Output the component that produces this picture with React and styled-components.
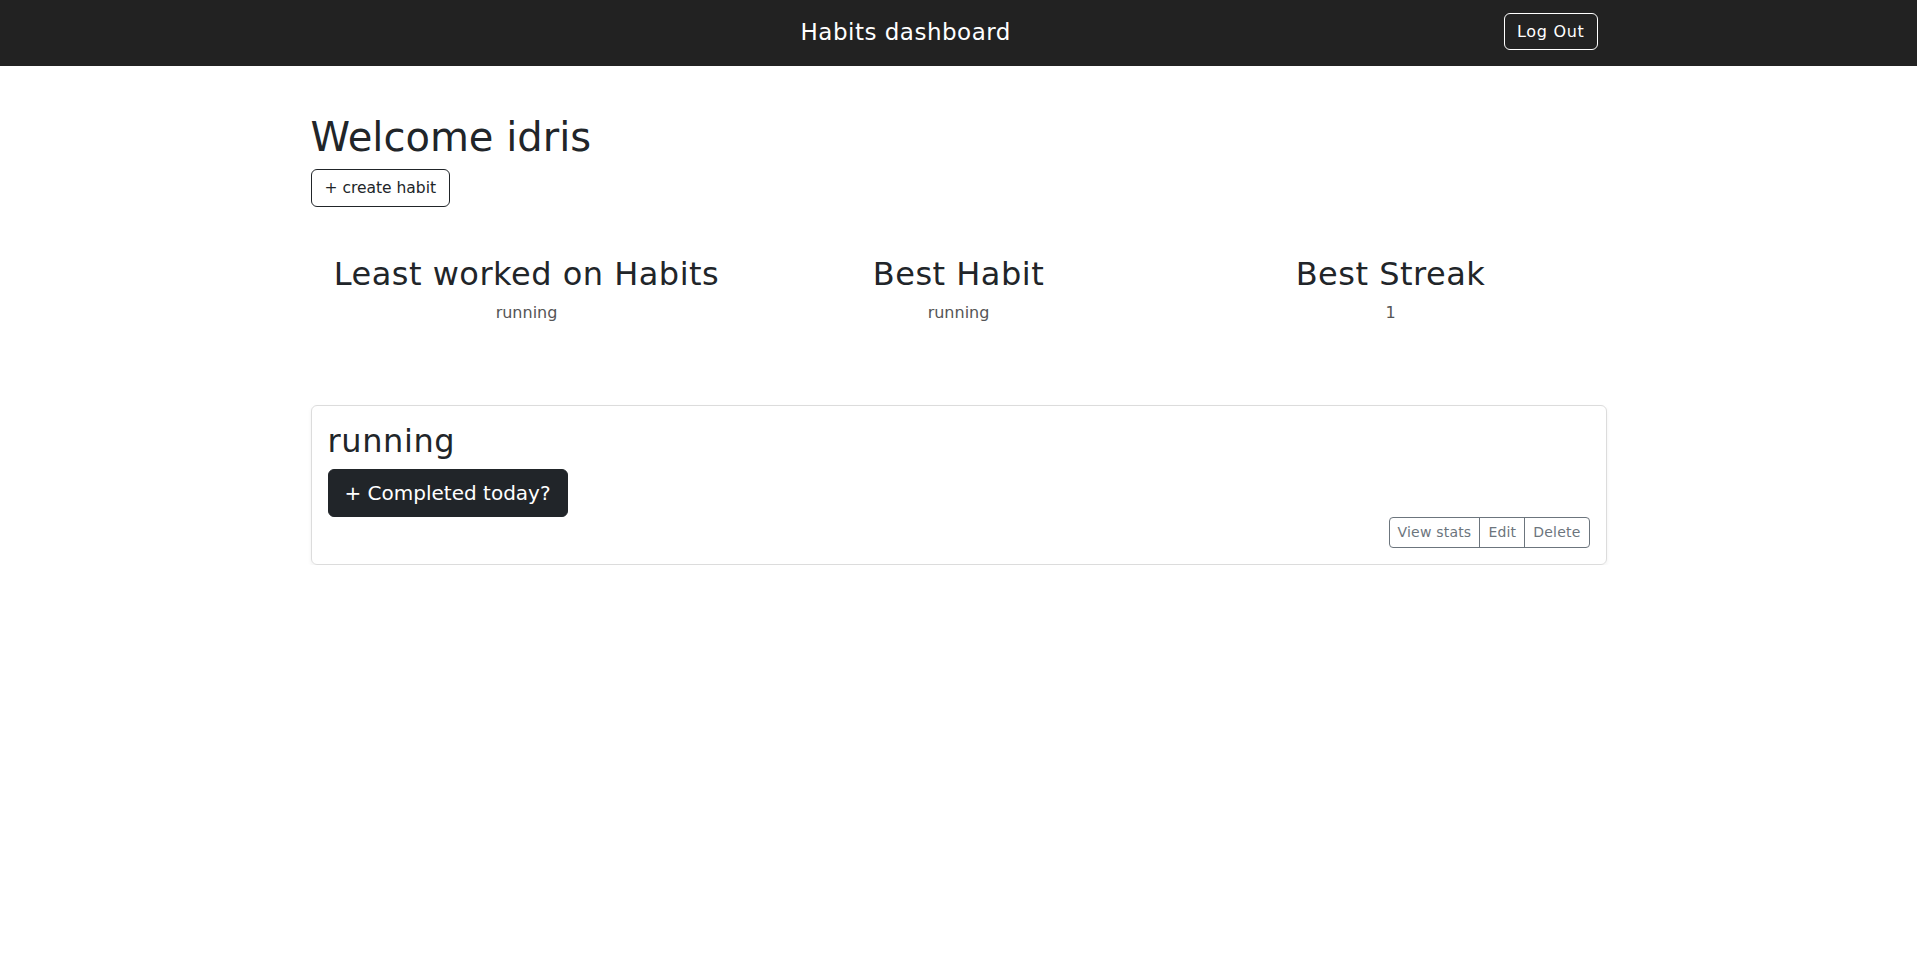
import React from "react";
import styled, { createGlobalStyle } from "styled-components";

const GlobalStyle = createGlobalStyle`
  * {
    box-sizing: border-box;
  }
  body {
    margin: 0;
    background: #fff;
    color: #212529;
    font-family: "DejaVu Sans", "Noto Sans", sans-serif;
    font-size: 16px;
    line-height: 1.5;
  }
`;

const Nav = styled.nav`
  background: #222222;
  height: 66px;
  display: flex;
  align-items: center;
`;

const NavInner = styled.div`
  width: 100%;
  max-width: 1320px;
  margin: -3px auto 0;
  padding: 0 21px 0 25px;
  display: flex;
  align-items: center;
`;

const Brand = styled.span`
  flex: 1;
  margin-right: 16px;
  text-align: center;
  color: #fff;
  font-size: 23px;
  line-height: 30px;
  letter-spacing: 0.5px;
`;

const OutlineButton = styled.button`
  font-family: inherit;
  font-size: ${(p) => p.$size || "16px"};
  line-height: ${(p) => p.$lh || "24px"};
  padding: ${(p) => p.$pad || "6px 12px"};
  background: transparent;
  color: ${(p) => p.$color};
  border: 1px solid ${(p) => p.$color};
  border-radius: 6px;
  letter-spacing: ${(p) => p.$ls || "0"};
  white-space: nowrap;
  cursor: pointer;
`;

const Container = styled.main`
  max-width: 1320px;
  margin: 0 auto;
  padding: 47px 12px 0;
`;

const Welcome = styled.h1`
  margin: 0 0 8px;
  font-size: 40px;
  font-weight: 400;
  line-height: 1.2;
`;

const StatsRow = styled.section`
  display: grid;
  grid-template-columns: repeat(3, 1fr);
  margin-top: 48px;
  text-align: center;
`;

const StatTitle = styled.h2`
  margin: 0 0 8px;
  font-size: 32px;
  font-weight: 400;
  line-height: 1.2;
  letter-spacing: 0.5px;
`;

const StatValue = styled.p`
  margin: 0 0 16px;
  color: #555;
`;

const Card = styled.div`
  margin-top: 64px;
  border: 1px solid #dcdcdc;
  border-radius: 6px;
  box-shadow: 0 2px 4px rgba(0, 0, 0, 0.06);
  padding: 16px;
`;

const CardTitle = styled.h2`
  margin: 0 0 8px;
  font-size: 32px;
  font-weight: 400;
  line-height: 1.2;
  letter-spacing: 0.6px;
`;

const DarkButton = styled.button`
  font-family: inherit;
  font-size: 20px;
  line-height: 30px;
  padding: 8px 16px;
  background: #212529;
  color: #fff;
  border: 1px solid #212529;
  border-radius: 6px;
  white-space: nowrap;
  cursor: pointer;
`;

const Actions = styled.div`
  display: flex;
  justify-content: flex-end;
`;

const Group = styled.div`
  display: inline-flex;

  & > button {
    border-radius: 0;
  }
  & > button + button {
    margin-left: -1px;
  }
  & > button:first-child {
    border-radius: 4px 0 0 4px;
  }
  & > button:last-child {
    border-radius: 0 4px 4px 0;
  }
`;

const stats = [
  { title: "Least worked on Habits", value: "running" },
  { title: "Best Habit", value: "running" },
  { title: "Best Streak", value: "1" },
];

const actions = ["View stats", "Edit", "Delete"];

export default function App() {
  return (
    <>
      <GlobalStyle />
      <Nav>
        <NavInner>
          <Brand>Habits dashboard</Brand>
          <OutlineButton $color="#fff" $pad="5.5px 12px" $ls="0.7px">
            Log Out
          </OutlineButton>
        </NavInner>
      </Nav>
      <Container>
        <Welcome>Welcome idris</Welcome>
        <OutlineButton $color="#212529" $size="15.5px" $pad="6px 13px">
          + create habit
        </OutlineButton>

        <StatsRow>
          {stats.map((s) => (
            <div key={s.title}>
              <StatTitle>{s.title}</StatTitle>
              <StatValue>{s.value}</StatValue>
            </div>
          ))}
        </StatsRow>

        <Card>
          <CardTitle>running</CardTitle>
          <DarkButton>+ Completed today?</DarkButton>
          <Actions>
            <Group>
              {actions.map((a) => (
                <OutlineButton
                  key={a}
                  $color="#6c757d"
                  $size="14px"
                  $lh="21px"
                  $pad="4px 8px"
                  $ls="0.2px"
                >
                  {a}
                </OutlineButton>
              ))}
            </Group>
          </Actions>
        </Card>
      </Container>
    </>
  );
}
